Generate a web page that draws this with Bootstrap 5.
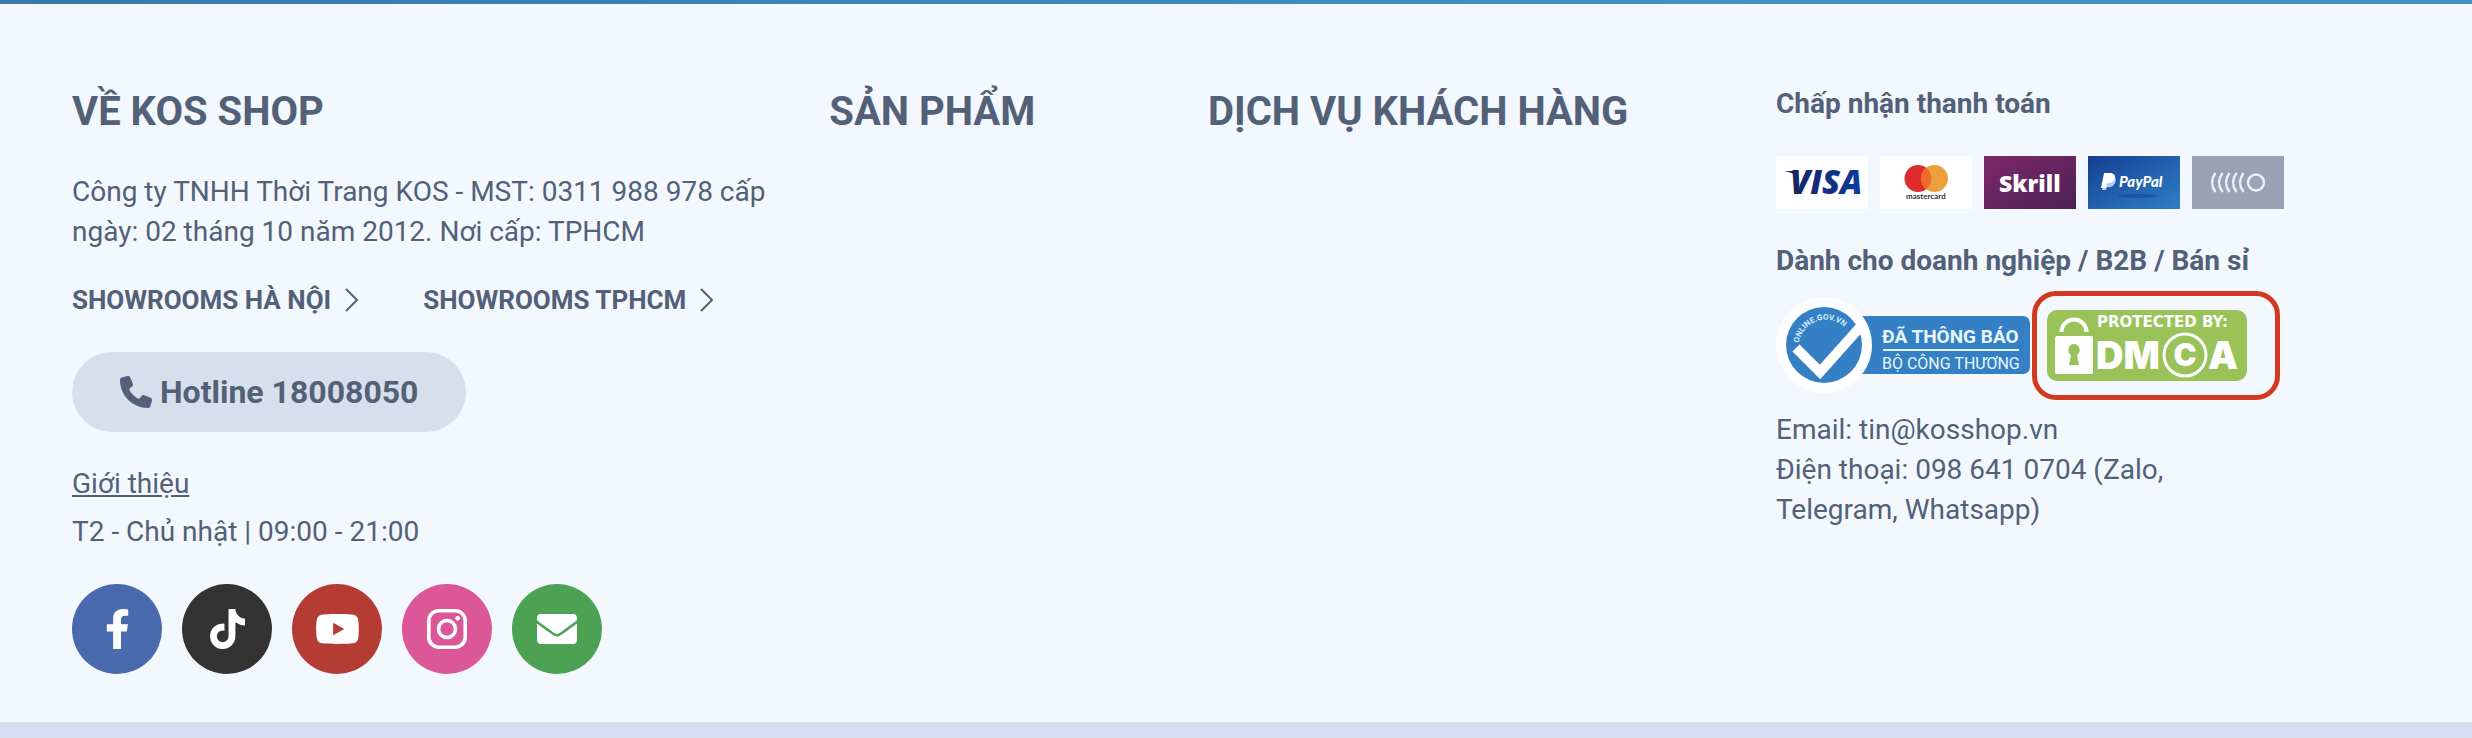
<!DOCTYPE html>
<html lang="vi">
<head>
<meta charset="utf-8">
<meta name="viewport" content="width=device-width, initial-scale=1">
<title>KOS Shop</title>
<link href="https://cdn.jsdelivr.net/npm/bootstrap@5.3.0/dist/css/bootstrap.min.css" rel="stylesheet">
<style>
  body { background: #f3f8ff; color: #526078; font-family: Roboto, "Liberation Sans", sans-serif; font-size: 28px; line-height: 40px; }
  a { color: inherit; }
  .top-rule { height: 4px; background: linear-gradient(90deg, #377aab, #4092cd 75%); }
  .bottom-rule { height: 16px; background: #d5dff1; }
  .footer-main { padding: 80px 188px 48px 72px; }
  .footer-row { --bs-gutter-x: 60px; }
  .footer-title { font-size: 40px; line-height: 48px; font-weight: 700; margin: 4px 0 36px; }
  .showrooms { font-size: 26px; gap: 64px; margin: 28px 0 32px; }
  .showrooms a { gap: 14px; }
  .hotline { background: #d8dfec; color: #526078; font-size: 32px; line-height: 48px; padding: 16px 48px; gap: 8px; }
  .about { margin-top: 32px; }
  .social { gap: 20px; margin-top: 32px; }
  .social a { width: 90px; height: 90px; color: #fff; }
  .social svg { height: 40px; }
  .facebook { background: #496aad; }
  .tiktok { background: #333; }
  .youtube { background: #b53c33; }
  .instagram { background: #dc5798; }
  .mail { background: #4da153; }
  .pay { gap: 12px; margin: 32px 0; }
  .pay svg { width: 92px; height: 53px; }
  .badges { margin: 10px 0; gap: 2px; }
  .framed { border: 5px solid #d23a20; border-radius: 24px; width: 248px; height: 109px; padding: 0 10px; }
</style>
</head>
<body>
<footer>
  <div class="top-rule"></div>
  <div class="footer-main container-fluid">
    <div class="row footer-row">
      <section class="col-4">
        <h2 class="footer-title">VỀ KOS SHOP</h2>
        <p class="mb-0">Công ty TNHH Thời Trang KOS - MST: 0311 988 978 cấp ngày: 02 tháng 10 năm 2012. Nơi cấp: TPHCM</p>
        <nav class="showrooms d-flex fw-bold" aria-label="Showrooms">
          <a href="#" class="d-flex align-items-center text-decoration-none">SHOWROOMS HÀ NỘI
            <svg width="14" height="24" viewBox="0 0 14 24" fill="none" stroke="currentColor" stroke-width="2"><path d="M1 1l11 11L1 23"/></svg></a>
          <a href="#" class="d-flex align-items-center text-decoration-none">SHOWROOMS TPHCM
            <svg width="14" height="24" viewBox="0 0 14 24" fill="none" stroke="currentColor" stroke-width="2"><path d="M1 1l11 11L1 23"/></svg></a>
        </nav>
        <a href="tel:18008050" class="hotline d-inline-flex align-items-center rounded-pill fw-bold text-decoration-none">
          <svg width="32" height="32" viewBox="0 0 512 512" fill="currentColor"><path d="M164.900 24.600c-7.700-18.600-28-28.500-47.400-23.200l-88 24C12.100 30.200 0 46 0 64c0 247.400 200.600 448 448 448c18 0 33.800-12.100 38.600-29.500l24-88c5.300-19.400-4.600-39.700-23.200-47.400l-96-40c-16.300-6.800-35.200-2.100-46.300 11.600L304.700 368C234.300 334.700 177.300 277.700 144 207.300L193.300 167c13.700-11.200 18.400-30 11.600-46.300l-40-96z"/></svg>
          Hotline 18008050</a>
        <p class="about mb-2"><a href="#">Giới thiệu</a></p>
        <p class="mb-0">T2 - Chủ nhật | 09:00 - 21:00</p>
        <nav class="social d-flex" aria-label="Mạng xã hội">
          <a href="#" aria-label="Facebook" class="facebook rounded-circle d-flex align-items-center justify-content-center"><svg viewBox="0 0 320 512" fill="currentColor"><path d="M279.140 288l14.220-92.660h-88.910v-60.130c0-25.350 12.420-50.060 52.240-50.060h40.420V6.260S260.430 0 225.360 0c-73.220 0-121.080 44.380-121.080 124.720v70.620H22.890V288h81.390v224h100.170V288z"/></svg></a>
          <a href="#" aria-label="TikTok" class="tiktok rounded-circle d-flex align-items-center justify-content-center"><svg viewBox="0 0 448 512" fill="currentColor"><path d="M448 209.910a210.060 210.060 0 0 1-122.770-39.250v178.720A162.550 162.550 0 1 1 185 188.310v89.890a74.620 74.620 0 1 0 52.230 71.180V0h88a121.180 121.180 0 0 0 1.860 22.170A122.180 122.180 0 0 0 381 102.390a121.430 121.430 0 0 0 67 20.140z"/></svg></a>
          <a href="#" aria-label="YouTube" class="youtube rounded-circle d-flex align-items-center justify-content-center"><svg viewBox="0 0 576 512" fill="currentColor"><path d="M549.655 124.083c-6.281-23.650-24.787-42.276-48.284-48.597C458.781 64 288 64 288 64S117.220 64 74.629 75.486c-23.497 6.322-42.003 24.947-48.284 48.597-11.412 42.867-11.412 132.305-11.412 132.305s0 89.438 11.412 132.305c6.281 23.650 24.787 41.500 48.284 47.821C117.220 448 288 448 288 448s170.780 0 213.371-11.486c23.497-6.321 42.003-24.171 48.284-47.821 11.412-42.867 11.412-132.305 11.412-132.305s0-89.438-11.412-132.305zM232.145 337.591V175.185l142.739 81.205-142.739 81.201z"/></svg></a>
          <a href="#" aria-label="Instagram" class="instagram rounded-circle d-flex align-items-center justify-content-center"><svg viewBox="0 0 40 40" fill="none" stroke="currentColor" stroke-width="3.600"><rect x="1.800" y="1.800" width="36.400" height="36.400" rx="10"/><circle cx="20" cy="20" r="8.500"/><circle cx="30.700" cy="9.300" r="2.400" fill="currentColor" stroke="none"/></svg></a>
          <a href="#" aria-label="Email" class="mail rounded-circle d-flex align-items-center justify-content-center"><svg viewBox="0 0 512 512" fill="currentColor"><path d="M502.300 190.800c3.900-3.100 9.700-.2 9.700 4.700V400c0 26.500-21.500 48-48 48H48c-26.500 0-48-21.500-48-48V195.600c0-5 5.700-7.800 9.700-4.700 22.400 17.400 52.100 39.500 154.100 113.600 21.100 15.400 56.700 47.800 92.200 47.600 35.700.3 72-32.800 92.300-47.600 102-74.100 131.600-96.300 154-113.700zM256 320c23.200.4 56.600-29.200 73.400-41.400 132.700-96.300 142.800-104.700 173.400-128.700 5.800-4.500 9.200-11.500 9.200-18.900v-19c0-26.500-21.500-48-48-48H48c-26.500 0-48 21.500-48 48v19c0 7.400 3.400 14.300 9.200 18.900 30.600 23.900 40.700 32.400 173.400 128.700 16.800 12.200 50.200 41.800 73.400 41.400z"/></svg></a>
        </nav>
      </section>
      <section class="col-2"><h2 class="footer-title text-nowrap">SẢN PHẨM</h2></section>
      <section class="col-3"><h2 class="footer-title text-nowrap">DỊCH VỤ KHÁCH HÀNG</h2></section>
      <section class="col-3">
        <p class="fw-bold mb-0">Chấp nhận thanh toán</p>
        <div class="pay d-flex">
          <svg viewBox="0 0 92 53" role="img" aria-label="Visa"><defs><linearGradient id="vg" x2="1"><stop stop-color="#172560"/><stop offset="1" stop-color="#0b3ba0"/></linearGradient></defs><rect width="92" height="53" fill="#fff"/><path d="M8 15h12l3 8-3-3c-3-3-7-4-12-5z" fill="#172560"/><text x="14" y="38" font-family="Open Sans" font-weight="800" font-style="italic" font-size="33" fill="url(#vg)">VISA</text></svg>
          <svg viewBox="0 0 92 53" role="img" aria-label="Mastercard"><rect width="92" height="53" fill="#fff"/><circle cx="38" cy="22.500" r="13.500" fill="#de2b2c"/><circle cx="54.500" cy="22.500" r="13.500" fill="#eba03d"/><path d="M46.200 11.800a13.500 13.500 0 0 1 0 21.400a13.500 13.500 0 0 1 0-21.400z" fill="#ed6c2c"/><text x="26" y="43" font-family="Lato" font-weight="700" font-size="8" fill="#333">mastercard</text></svg>
          <svg viewBox="0 0 92 53" role="img" aria-label="Skrill"><defs><linearGradient id="sg" x2="1" y2="1"><stop stop-color="#7e2868"/><stop offset="1" stop-color="#4c2254"/></linearGradient></defs><rect width="92" height="53" fill="url(#sg)"/><text x="15" y="36" font-family="Open Sans" font-weight="800" font-size="23" fill="#fff">Skrill</text></svg>
          <svg viewBox="0 0 92 53" role="img" aria-label="PayPal"><defs><linearGradient id="pg" x2="1" y2="1"><stop stop-color="#153f92"/><stop offset="1" stop-color="#2e80c6"/></linearGradient></defs><rect width="92" height="53" fill="url(#pg)"/><ellipse cx="50" cy="40" rx="20" ry="2" fill="#174a8d" opacity=".6"/><path d="M17 20h7c7 0 4 13-5 11l-1 3h-4z" fill="#b8cdec"/><path d="M16 17h6c8 0 6 11-3 10l-1 5h-5z" fill="#fff"/><text x="31" y="31" font-family="Lato" font-weight="900" font-style="italic" font-size="15" fill="#fff">PayPal</text></svg>
          <svg viewBox="0 0 92 53" fill="none" stroke="#eff1fa" stroke-width="2.400" role="img" aria-label="Thẻ thanh toán"><path d="M0 0h92v53H0z" fill="#9ba1b7" stroke="none"/><circle cx="64" cy="26.500" r="8"/><path d="M23.500 17q-7 9.500 0 19M30.500 17q-7 9.500 0 19M37.500 17q-7 9.500 0 19M44.500 17q-7 9.500 0 19M51.500 17q-7 9.500 0 19"/></svg>
        </div>
        <p class="fw-bold mb-0">Dành cho doanh nghiệp / B2B / Bán sỉ</p>
        <div class="badges d-flex align-items-center">
          <a href="#" class="d-flex" aria-label="Đã thông báo Bộ Công Thương">
            <svg width="254" height="97" viewBox="0 0 254 97"><rect x="70" y="19" width="184" height="58" rx="7" fill="#3580c4"/><circle cx="48" cy="48" r="48" fill="#fdfeff"/><circle cx="48" cy="48" r="38" fill="#3580c4"/><path d="M20 51l24 24 42-47" fill="none" stroke="#fff" stroke-width="10"/><defs><path id="arc" d="M23 46a27 27 0 0 1 50-10"/></defs><text font-family="Roboto" font-size="8" font-weight="700" fill="#d3ecff"><textPath href="#arc">ONLINE.GOV.VN</textPath></text><g fill="#e7f7ff" font-family="Roboto, Liberation Sans"><text x="106" y="46" font-size="19" font-weight="700">ĐÃ THÔNG BÁO</text><path d="M107 52h136v2H107z"/><text x="106" y="72" font-size="16">BỘ CÔNG THƯƠNG</text></g></svg>
          </a>
          <div class="framed d-flex align-items-center">
            <a href="#" class="d-flex" aria-label="Protected by DMCA">
              <svg width="200" height="71" viewBox="0 0 200 71"><rect width="200" height="71" rx="10" fill="#99c359"/><path d="M14.500 22a12.500 12.500 0 0 1 25 0" fill="none" stroke="#fff" stroke-width="4"/><rect x="8" y="26" width="38" height="38" rx="2" fill="#fff"/><path d="M27 34a6 6 0 0 1 3 11l2 10H22l2-10a6 6 0 0 1 3-11z" fill="#99c359"/><g fill="#fff" font-family="Inter" font-weight="900"><text x="50" y="17" font-family="DejaVu Sans" font-weight="700" font-size="15">PROTECTED BY:</text><text x="49" y="59" font-size="38">DM</text><text x="161" y="59" font-size="38">A</text><text x="138" y="56" font-size="31" text-anchor="middle">C</text></g><circle cx="138" cy="45" r="21" fill="none" stroke="#fff" stroke-width="3"/></svg>
            </a>
          </div>
        </div>
        <p class="mb-0">Email: tin@kosshop.vn<br>Điện thoại: 098 641 0704 (Zalo, Telegram, Whatsapp)</p>
      </section>
    </div>
  </div>
  <div class="bottom-rule"></div>
</footer>
<script src="https://cdn.jsdelivr.net/npm/bootstrap@5.3.0/dist/js/bootstrap.bundle.min.js"></script>
</body>
</html>
